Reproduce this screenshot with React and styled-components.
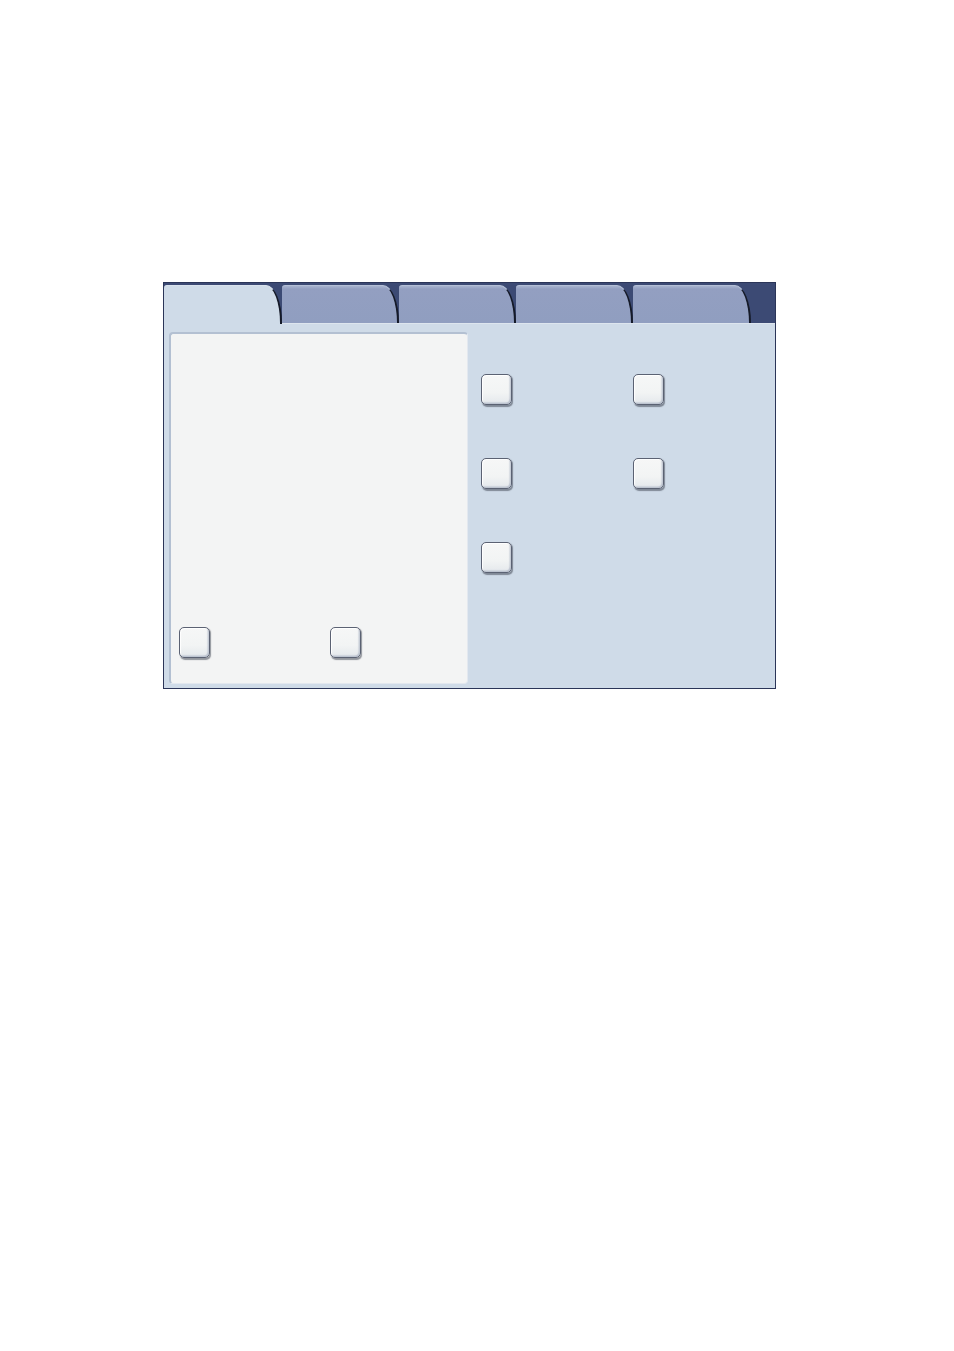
import React from "react";
import styled, { createGlobalStyle } from "styled-components";

const Global = createGlobalStyle`
  html, body { margin: 0; padding: 0; background: #ffffff; }
  body { font-family: "Liberation Sans", Arial, sans-serif; }
`;

const Page = styled.div`
  width: 954px;
  height: 1351px;
  padding: 282px 0 0 163px;
  box-sizing: border-box;
`;

const Frame = styled.div`
  width: 613px;
  height: 407px;
  box-sizing: border-box;
  background: #3c4a74;
  border: 1px solid #2b3558;
  display: flex;
  flex-direction: column;
`;

const TabStrip = styled.div`
  display: flex;
  height: 40px;
  padding-top: 2px;
  box-sizing: border-box;
  flex-shrink: 0;
`;

const Tab = styled.div`
  width: ${(p) => p.$w}px;
  box-sizing: border-box;
  background: ${(p) => (p.$active ? "#cfdbe8" : "linear-gradient(#a7b3cf 0, #939fc1 3px, #909ec0 100%)")};
  border-top-left-radius: 3px;
  border-top-right-radius: 16px 38px;
  border-right: 2px solid #151a28;
  border-top: 1px solid ${(p) => (p.$active ? "#d9e2ec" : "#b4bfd6")};
  margin-bottom: ${(p) => (p.$active ? "-1px" : "0")};
  position: relative;
  z-index: ${(p) => (p.$active ? 1 : 0)};
`;

const Body = styled.div`
  flex: 1;
  background: #cfdbe8;
  display: flex;
  padding: 8px 0 4px 5px;
  box-sizing: border-box;
  border-top: 1px solid #dde5ee;
`;

const LeftPane = styled.div`
  width: 299px;
  box-sizing: border-box;
  background: #f3f4f4;
  border-radius: 4px;
  border-top: 2px solid #b3c0d2;
  border-left: 2px solid #b3c0d2;
  border-right: 1px solid #e3e8ef;
  border-bottom: 1px solid #e3e8ef;
  display: flex;
  flex-direction: column;
  justify-content: flex-end;
  padding: 0 0 25px 8px;
`;

const ButtonRow = styled.div`
  display: flex;
  gap: ${(p) => p.$gap}px;
`;

const RightArea = styled.div`
  flex: 1;
  display: grid;
  grid-template-columns: 31px 31px;
  grid-auto-rows: 31px;
  column-gap: 121px;
  row-gap: 53px;
  align-content: start;
  padding: 42px 0 0 13px;
`;

const Square = styled.div`
  width: 31px;
  height: 31px;
  box-sizing: border-box;
  border: 1.5px solid #5b6273;
  border-radius: 5px;
  background: linear-gradient(#f6f7f7 0%, #f2f4f4 60%, #e4e8ec 100%);
  box-shadow: 1px 1.5px 1px rgba(50, 56, 70, 0.5), inset -1.5px -1.5px 1px rgba(140, 150, 172, 0.45), inset 1px 1px 1px #ffffff;
`;

const tabs = [
  { w: 118, active: true },
  { w: 117 },
  { w: 117 },
  { w: 117 },
  { w: 118 },
];

export default function App() {
  return (
    <Page>
      <Global />
      <Frame>
        <TabStrip>
          {tabs.map((t, i) => (
            <Tab key={i} $w={t.w} $active={t.active} />
          ))}
        </TabStrip>
        <Body>
          <LeftPane>
            <ButtonRow $gap={120}>
              <Square />
              <Square />
            </ButtonRow>
          </LeftPane>
          <RightArea>
            <Square />
            <Square />
            <Square />
            <Square />
            <Square />
          </RightArea>
        </Body>
      </Frame>
    </Page>
  );
}
